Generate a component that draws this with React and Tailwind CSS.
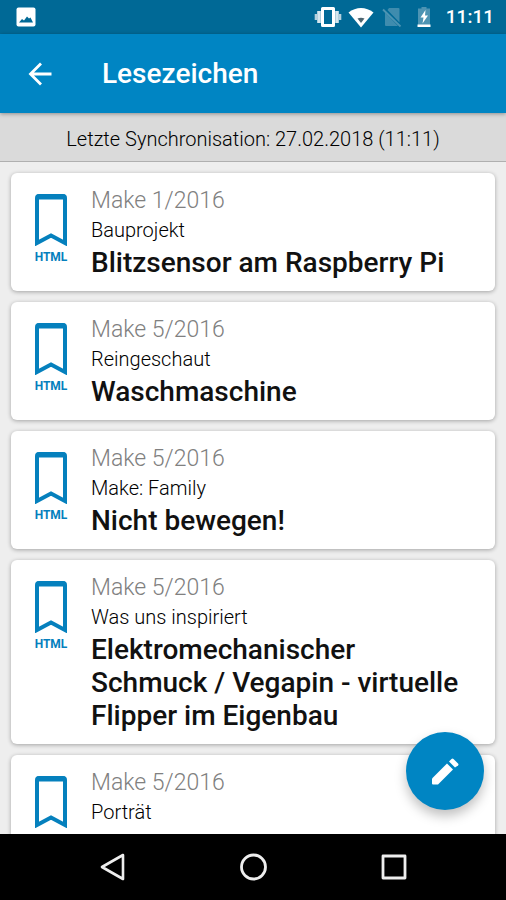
const bookmarks = [
  { issue: 'Make 1/2016', section: 'Bauprojekt', title: 'Blitzsensor am Raspberry Pi', format: 'HTML' },
  { issue: 'Make 5/2016', section: 'Reingeschaut', title: 'Waschmaschine', format: 'HTML' },
  { issue: 'Make 5/2016', section: 'Make: Family', title: 'Nicht bewegen!', format: 'HTML' },
  {
    issue: 'Make 5/2016',
    section: 'Was uns inspiriert',
    title: 'Elektromechanischer Schmuck / Vegapin - virtuelle Flipper im Eigenbau',
    format: 'HTML',
  },
  { issue: 'Make 5/2016', section: 'Porträt' },
];

function StatusBar() {
  return (
    <div className="flex h-[34px] shrink-0 items-center bg-[#006996] pl-4 pr-3 text-white">
      <svg viewBox="0 0 20 20" className="h-5 w-5" aria-hidden="true">
        <rect x="0.5" y="0.5" width="19" height="19" rx="2" fill="#fff" />
        <path d="M3 15.5l3-3.500 2 1.500 3-4 2 2 1.500-1 2.500 5z" fill="#006996" />
      </svg>

      <div className="ml-auto flex items-center">
        <svg viewBox="0 0 28 22" className="h-[22px] w-7" aria-hidden="true">
          <path d="M8.500 2.500h11v17h-11z" fill="none" stroke="#fff" strokeWidth="3" strokeLinejoin="round" />
          <path d="M5 5v12M23 5v12" stroke="#d5e6ee" strokeWidth="3.600" />
          <path d="M2 8v6M26 8v6" stroke="#b5d0dd" strokeWidth="2.600" />
        </svg>
        <svg viewBox="0 0 26 21" className="ml-1.5 h-[21px] w-[26px]" aria-hidden="true">
          <path d="M0.500 5.500C8-0.500 18-0.500 25.500 5.500L13 20.500z" fill="#fff" />
          <path d="M9.500 11.500q3.500-1.500 7 0L13 16z" fill="#4d6570" />
        </svg>
        <svg viewBox="0 0 20 20" className="ml-2 h-5 w-5" aria-hidden="true">
          <path d="M7 1h9.500q1 0 1 1v13.500L5.500 3zM3 5.500l13 13.500H4q-1 0-1-1z" fill="#3f8cae" />
          <path d="M1 2.500L18.500 19.500" stroke="#4d94b3" strokeWidth="1.800" />
        </svg>
        <svg viewBox="0 0 16 22" className="ml-[14px] h-[22px] w-4" aria-hidden="true">
          <path d="M5.500 1h5v1.500h3.500v16.500H2V2.500h3.500z" fill="#4d94b3" />
          <path d="M9.500 4L4.500 11.500h3L6.500 17.500l5.500-8H9z" fill="#fff" />
          <path d="M1.500 18.500h13v2.500h-13z" fill="#fff" />
        </svg>
        <span className="ml-[14px] text-[19px] font-medium leading-6">11:11</span>
      </div>
    </div>
  );
}

function AppBar() {
  return (
    <header className="relative z-10 flex h-[79px] shrink-0 items-center bg-[#0085c3] pl-7 text-white shadow-[0_1px_4px_rgba(0,0,0,0.35)]">
      <button type="button" aria-label="Zurück">
        <svg viewBox="0 0 24 24" className="h-6 w-6" fill="none" stroke="currentColor" strokeWidth="2.800" aria-hidden="true">
          <path d="M23.500 12H2.500M13 1.500L2.500 12L13 22.500" />
        </svg>
      </button>
      <h1 className="ml-[50px] text-[28px] font-medium leading-9">Lesezeichen</h1>
    </header>
  );
}

function BookmarkIcon({ format }) {
  return (
    <div className="flex w-8 shrink-0 flex-col items-center text-[#0580bd]">
      <svg viewBox="0 0 32 52" className="h-[52px] w-8" aria-hidden="true">
        <path d="M2 49V4q0-2 2-2h24q2 0 2 2v45l-14-7.500z" fill="none" stroke="currentColor" strokeWidth="4" />
        <path d="M2 3h28" stroke="currentColor" strokeWidth="5" />
      </svg>
      {format && <span className="mt-[3px] text-xs font-bold leading-4">{format}</span>}
    </div>
  );
}

function BookmarkCard({ issue, section, title, format }) {
  return (
    <li className="shrink-0 rounded-md bg-white shadow-[0_1px_4px_rgba(0,0,0,0.32)]">
      <a href="#artikel" className="flex pb-3 pl-6 pr-6 pt-[13px]">
        <div className="mt-2">
          <BookmarkIcon format={format} />
        </div>
        <div className="ml-6 min-w-0 flex-1">
          <p className="text-[23px] font-light leading-[30px] text-[#808080]">{issue}</p>
          <p className="text-xl font-light leading-7 text-black">{section}</p>
          {title && <h2 className="mt-0.5 text-[28px] font-medium leading-[33px] text-[#111]">{title}</h2>}
        </div>
      </a>
    </li>
  );
}

function NavBar() {
  return (
    <nav className="flex h-[66px] shrink-0 items-center justify-center gap-[112px] bg-black text-[#eee]">
      <button type="button" aria-label="Zurück">
        <svg viewBox="0 0 28 28" className="h-7 w-7" fill="none" stroke="currentColor" strokeWidth="2.600" strokeLinejoin="round" aria-hidden="true">
          <path d="M24 2L3 14L24 26z" />
        </svg>
      </button>
      <button type="button" aria-label="Startseite">
        <svg viewBox="0 0 28 28" className="h-7 w-7" fill="none" stroke="currentColor" strokeWidth="2.800" aria-hidden="true">
          <circle cx="14.500" cy="14" r="12" />
        </svg>
      </button>
      <button type="button" aria-label="Übersicht">
        <svg viewBox="0 0 28 28" className="h-7 w-7" fill="none" stroke="currentColor" strokeWidth="2.800" strokeLinejoin="round" aria-hidden="true">
          <rect x="4" y="3" width="22" height="22" />
        </svg>
      </button>
    </nav>
  );
}

export default function App() {
  return (
    <div className="flex h-screen flex-col overflow-hidden bg-[#eee] font-[Roboto,sans-serif]">
      <StatusBar />
      <AppBar />
      <p className="flex h-[49px] shrink-0 items-center justify-center border-b border-[#b0b0b0] bg-[#dadada] pt-1 text-xl font-light leading-6 text-black">
        Letzte Synchronisation: 27.02.2018 (11:11)
      </p>

      <main className="relative min-h-0 flex-1 overflow-hidden">
        <ul className="flex flex-col gap-[11px] px-[11px] pt-[11px]">
          {bookmarks.map((bookmark) => (
            <BookmarkCard key={bookmark.issue + bookmark.section} {...bookmark} />
          ))}
        </ul>

        <button
          type="button"
          aria-label="Bearbeiten"
          className="absolute bottom-6 right-[22px] flex h-[78px] w-[78px] items-center justify-center rounded-full bg-[#0085c3] text-white shadow-[0_6px_12px_rgba(0,0,0,0.25)]"
        >
          <svg viewBox="0 0 27 27" className="h-[27px] w-[27px]" fill="currentColor" aria-hidden="true">
            <path d="M0 25.500V20.500L15 5.500L21 11.500L6 26.500H1Q0 26.500 0 25.500z" />
            <path d="M17 3.500L19.500 1Q20.500 0 21.500 1L26 5.500Q27 6.500 26 7.500L23 9.500z" />
          </svg>
        </button>
      </main>

      <NavBar />
    </div>
  );
}
